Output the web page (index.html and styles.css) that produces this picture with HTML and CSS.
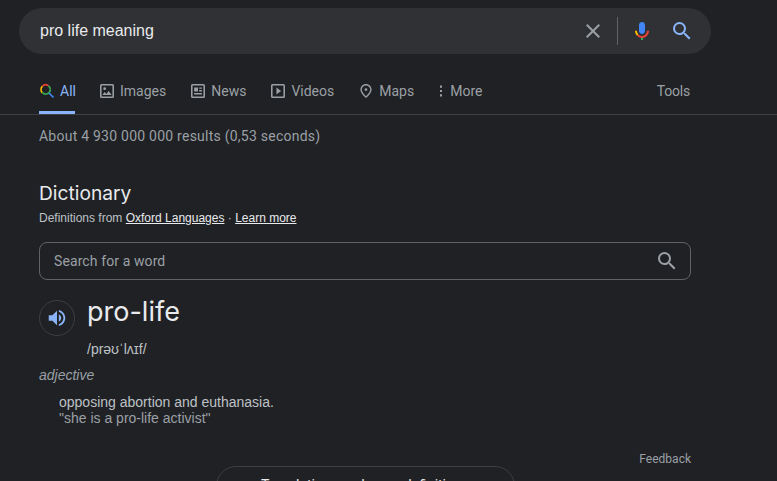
FILE: index.html
```html
<!DOCTYPE html>
<html lang="en">
<head>
<meta charset="utf-8">
<title>pro life meaning</title>
<link rel="stylesheet" href="styles.css">
</head>
<body>
<header class="search-bar">
  <span class="query">pro life meaning</span>
  <svg class="clear" width="24" height="24" viewBox="0 0 24 24"><path fill="#9aa0a6" d="M19 6.41 17.59 5 12 10.59 6.41 5 5 6.41 10.59 12 5 17.59 6.41 19 12 13.41 17.59 19 19 17.59 13.41 12z"/></svg>
  <span class="bar-divider"></span>
  <svg class="mic" width="24" height="24" viewBox="0 0 24 24"><path fill="#4285f4" d="M12 15c1.66 0 3-1.31 3-2.97V5.97C15 4.31 13.66 3 12 3S9 4.31 9 5.97v6.06C9 13.69 10.34 15 12 15z"/><path fill="#34a853" d="M11 18.1h2V21h-2z"/><path fill="#fbbc05" d="M7.05 16.87c-1.27-1.33-2.05-3.1-2.05-5.05h2c0 1.4.56 2.67 1.47 3.6l-1.42 1.45z"/><path fill="#ea4335" d="M12 16.9c-1.4 0-2.67-.56-3.53-1.48l-1.42 1.45C8.32 18.2 10.07 19 12 19c3.87 0 7-3.13 7-7.18h-2c0 2.8-2.24 5.08-5 5.08z"/></svg>
  <svg class="go" width="24" height="24" viewBox="0 0 24 24"><path fill="#8ab4f8" d="M15.5 14h-.79l-.28-.27A6.471 6.471 0 0 0 16 9.5 6.5 6.5 0 1 0 9.5 16c1.61 0 3.09-.59 4.23-1.57l.27.28v.79l5 4.99L20.49 19l-4.99-5zm-6 0C7.01 14 5 11.99 5 9.5S7.01 5 9.5 5 14 7.01 14 9.5 11.99 14 9.5 14z"/></svg>
</header>

<nav class="tabs">
  <a class="tab tab-active">
    <svg width="16" height="16" viewBox="0 0 16 16" fill="none" stroke-width="1.7"><path stroke="#34a853" d="M11.300 6.500a4.700 4.700 0 0 0-2-3.800"/><path stroke="#ea4335" d="M9.300 2.700a4.700 4.700 0 0 0-6 .6"/><path stroke="#fbbc05" d="M3.300 3.300a4.700 4.700 0 0 0 0 6.400"/><path stroke="#34a853" d="M3.300 9.700a4.700 4.700 0 0 0 8-3.200"/><path stroke="#4285f4" d="m10 10 4.500 4.500"/></svg>
    All
  </a>
  <a class="tab">
    <svg width="16" height="16" viewBox="1.7 1.7 20.6 20.6"><path fill="#9aa0a6" d="M19 5v14H5V5h14m0-2H5a2 2 0 0 0-2 2v14a2 2 0 0 0 2 2h14a2 2 0 0 0 2-2V5a2 2 0 0 0-2-2zm-4.860 8.860-3 3.870L9 13.140 6 17h12l-3.860-5.140z"/><circle cx="9" cy="9" r="1.800" fill="#9aa0a6"/></svg>
    Images
  </a>
  <a class="tab">
    <svg width="16" height="16" viewBox="1.700 1.700 20.600 20.600"><path fill="#9aa0a6" d="M19 3H5a2 2 0 0 0-2 2v14a2 2 0 0 0 2 2h14a2 2 0 0 0 2-2V5a2 2 0 0 0-2-2zm0 16H5V5h14v14zM7 7.500h5v5H7zM13.500 7.500H17v1.700h-3.500zM13.500 10.800H17v1.700h-3.500zM7 14.500h10v2H7z"/></svg>
    News
  </a>
  <a class="tab">
    <svg width="16" height="16" viewBox="1.700 1.700 20.600 20.600"><path fill="#9aa0a6" d="M10 16.500v-9l6 4.500-6 4.500zM19 3H5a2 2 0 0 0-2 2v14a2 2 0 0 0 2 2h14a2 2 0 0 0 2-2V5a2 2 0 0 0-2-2zm0 16H5V5h14v14z"/></svg>
    Videos
  </a>
  <a class="tab">
    <svg width="16" height="16" viewBox="0.600 0.600 22.800 22.800"><path fill="#9aa0a6" d="M12 12c-1.100 0-2-.9-2-2s.9-2 2-2 2 .9 2 2-.9 2-2 2zm6-1.800C18 6.570 15.350 4 12 4s-6 2.570-6 6.200c0 2.340 1.950 5.440 6 9.140 4.050-3.700 6-6.800 6-9.140zM12 2c4.200 0 8 3.220 8 8.200 0 3.320-2.670 7.250-8 11.800-5.330-4.550-8-8.480-8-11.800C4 5.220 7.800 2 12 2z"/></svg>
    Maps
  </a>
  <a class="tab tab-more">
    <svg width="16" height="16" viewBox="0 0 16 16"><path fill="#9aa0a6" d="M7 2.500h2v2.200H7zM7 6.900h2v2.200H7zM7 11.300h2v2.200H7z"/></svg>
    More
  </a>
  <a class="tab tab-tools">Tools</a>
</nav>

<main class="content">
  <p class="stats">About 4 930 000 000 results (0,53 seconds)</p>

  <section class="dictionary">
    <h2 class="dict-title">Dictionary</h2>
    <p class="dict-source">Definitions from <a>Oxford Languages</a> · <a>Learn more</a></p>

    <div class="word-search">
      <span>Search for a word</span>
      <svg width="24" height="24" viewBox="0 0 24 24"><path fill="#9aa0a6" d="M15.500 14h-.79l-.28-.27A6.471 6.471 0 0 0 16 9.500 6.500 6.500 0 1 0 9.500 16c1.610 0 3.090-.59 4.230-1.570l.27.28v.79l5 4.990L20.490 19l-4.990-5zm-6 0C7.010 14 5 11.990 5 9.500S7.010 5 9.500 5 14 7.010 14 9.500 11.990 14 9.500 14z"/></svg>
    </div>

    <div class="headword">
      <span class="speaker">
        <svg width="22" height="22" viewBox="0 0 24 24"><path fill="#8ab4f8" d="M3 9v6h4l5 5V4L7 9H3zm13.500 3c0-1.770-1.020-3.290-2.500-4.030v8.050c1.480-.73 2.500-2.250 2.500-4.020zM14 3.230v2.060c2.890.86 5 3.540 5 6.710s-2.110 5.850-5 6.710v2.060c4.010-.91 7-4.490 7-8.770 0-4.280-2.990-7.860-7-8.770z"/></svg>
      </span>
      <div class="word-block">
        <div class="word">pro-life</div>
        <div class="phonetic">/prəʊˈlʌɪf/</div>
      </div>
    </div>

    <div class="pos">adjective</div>
    <div class="sense">
      <div class="meaning">opposing abortion and euthanasia.</div>
      <div class="example">"she is a pro-life activist"</div>
    </div>

    <div class="feedback">Feedback</div>
    <div class="more-wrap"><div class="more-btn">Translations and more definitions</div></div>
  </section>
</main>
</body>
</html>
```

FILE: styles.css
```css
* { box-sizing: border-box; }
html, body { height: 481px; overflow: hidden; }
body {
  margin: 0;
  background: #202124;
  color: #bdc1c6;
  font-family: Roboto, "Liberation Sans", sans-serif;
  font-size: 14px;
}
p { margin: 0; }

.search-bar {
  display: flex;
  align-items: center;
  width: 692px;
  height: 46px;
  margin: 8px 0 0 19px;
  padding: 0 17px 0 21px;
  background: #303134;
  border-radius: 23px;
}
.query {
  flex: 1;
  font-family: "Liberation Sans", Arial, sans-serif;
  font-size: 16px;
  color: #e8eaed;
}
.clear { margin-right: 12px; }
.bar-divider {
  width: 1px;
  height: 28px;
  background: #5f6368;
}
.mic { margin-left: 12px; }
.go { margin-left: 16px; }

.tabs {
  display: flex;
  align-items: flex-start;
  height: 61px;
  padding: 0 87px 0 39px;
  border-bottom: 1px solid #3c4043;
}
.tab {
  display: flex;
  align-items: center;
  gap: 5px;
  height: 60px;
  padding-top: 14px;
  margin-right: 24px;
  color: #9aa0a6;
  font-size: 14px;
}
.tab svg { flex: none; }
.tab-active {
  width: 36px;
  flex: none;
  color: #8ab4f8;
  border-bottom: 3px solid #8ab4f8;
  padding-top: 17px;
}
.tab-more { gap: 1px; margin-left: -5px; }
.tab-tools { margin: 0 0 0 auto; letter-spacing: -0.2px; }

.content { width: 691px; padding-left: 39px; }
.stats {
  margin-top: 11px;
  line-height: 20px;
  color: #9aa0a6;
  letter-spacing: 0.24px;
}
.dictionary { margin-top: 34px; }
.dict-title {
  margin: 0;
  font-family: Inter, sans-serif;
  font-size: 19.2px;
  font-weight: 400;
  line-height: 26px;
  color: #e8eaed;
}
.dict-source {
  margin-top: 3px;
  font-family: "Liberation Sans", Arial, sans-serif;
  font-size: 12px;
  line-height: 18px;
  color: #bdc1c6;
}
.dict-source a { color: #e8eaed; text-decoration: underline; }

.word-search {
  display: flex;
  align-items: center;
  justify-content: space-between;
  height: 38px;
  margin-top: 15px;
  padding: 0 11px 0 14px;
  border: 1px solid #5f6368;
  border-radius: 8px;
  color: #9aa0a6;
  letter-spacing: 0.1px;
}

.headword { display: flex; margin-top: 14px; }
.speaker {
  display: flex;
  align-items: center;
  justify-content: center;
  width: 36px;
  height: 36px;
  margin: 6px 12px 0 0;
  border: 1px solid #3c4043;
  border-radius: 50%;
}
.word {
  font-family: Inter, sans-serif;
  font-size: 27px;
  line-height: 36px;
  color: #e8eaed;
}
.phonetic {
  margin-top: 10px;
  font-family: "Liberation Sans", Arial, sans-serif;
  font-size: 14px;
  line-height: 18px;
  color: #bdc1c6;
}
.pos {
  margin-top: 8px;
  font-family: "Liberation Sans", Arial, sans-serif;
  font-style: italic;
  line-height: 18px;
  color: #9aa0a6;
}
.sense {
  margin: 10px 0 0 20px;
  font-family: "Liberation Sans", Arial, sans-serif;
  line-height: 16px;
}
.meaning { color: #bdc1c6; }
.example { color: #9aa0a6; }
.feedback {
  margin-top: 27px;
  text-align: right;
  font-size: 12px;
  line-height: 13px;
  color: #9aa0a6;
}
.more-wrap { display: flex; justify-content: center; }
.more-btn {
  width: 299px;
  height: 40px;
  padding-top: 10px;
  text-align: center;
  border: 1px solid #3c4043;
  border-radius: 20px;
  color: #e8eaed;
}
```
